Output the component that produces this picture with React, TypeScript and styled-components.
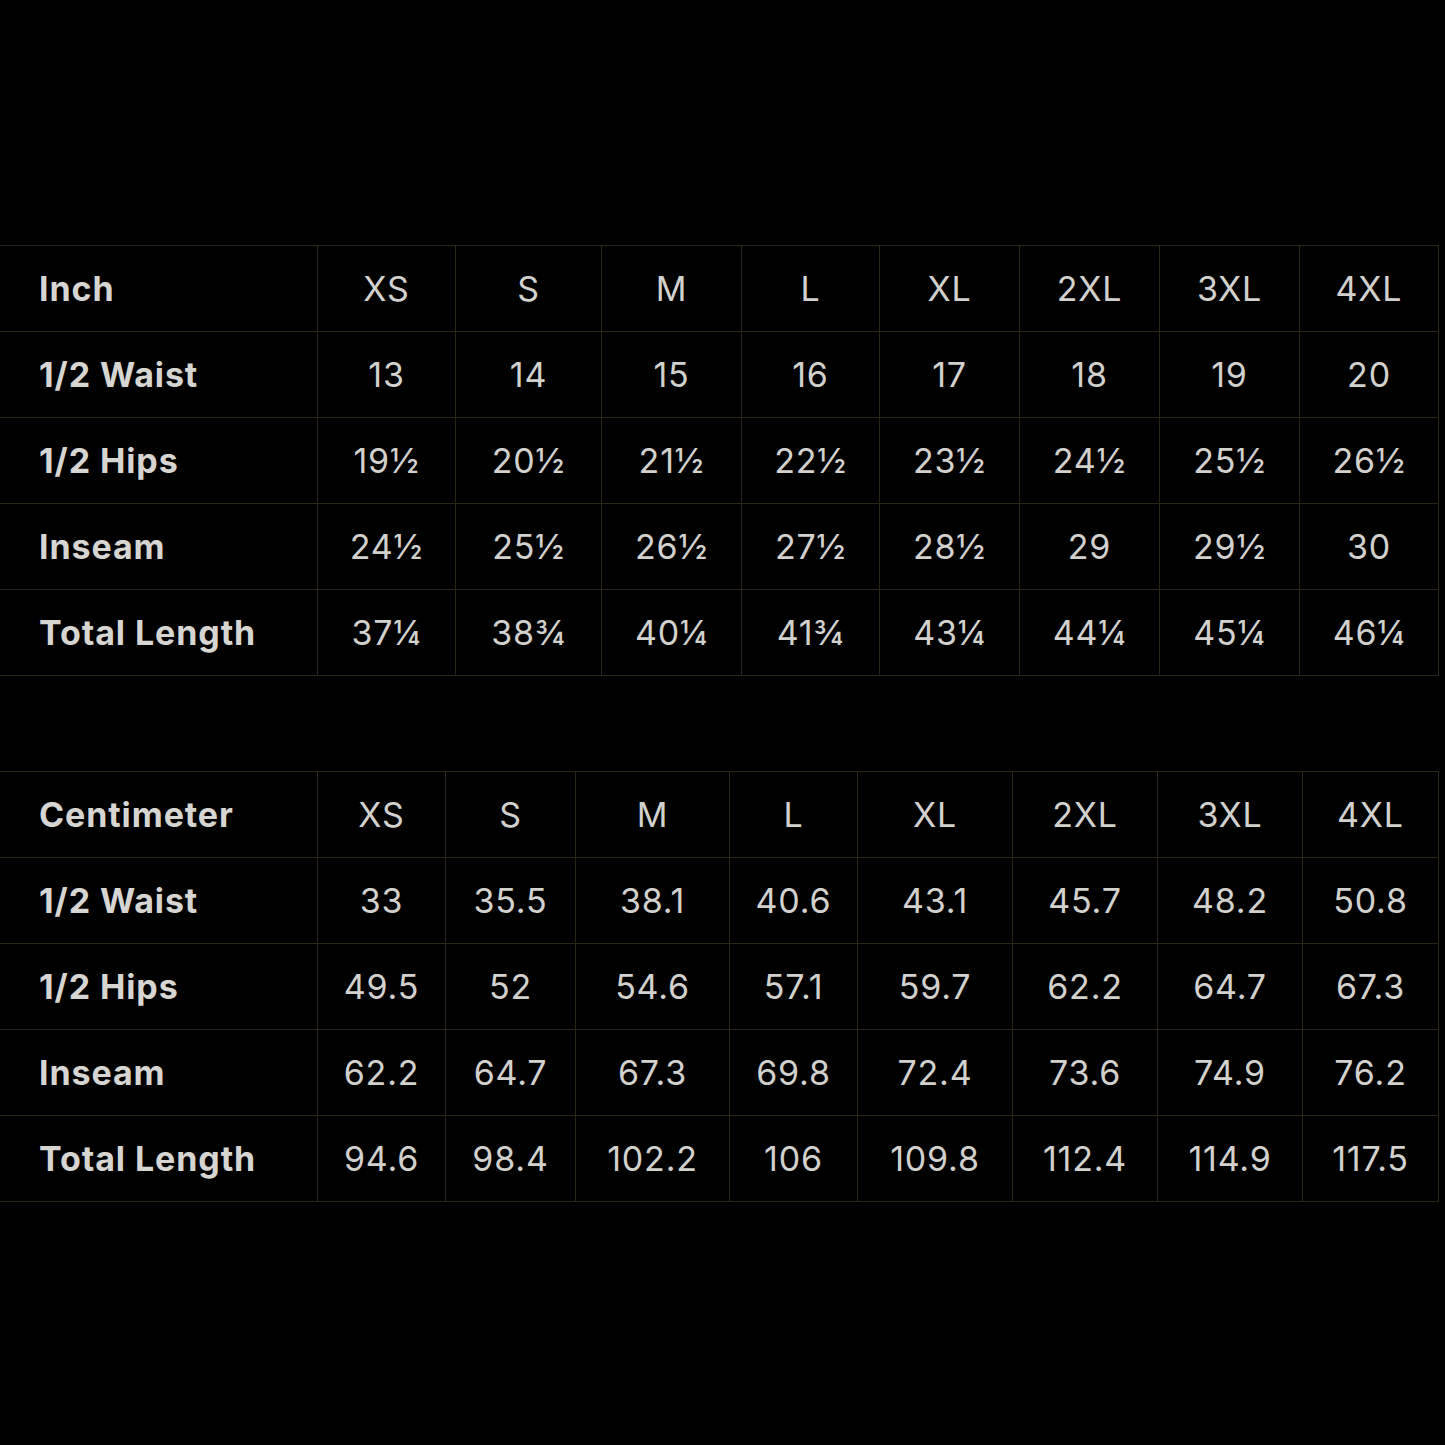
import React from "react";
import styled, { createGlobalStyle } from "styled-components";

const Global = createGlobalStyle`
  html, body { margin: 0; padding: 0; background: #000; }
  body { font-family: Inter, "Noto Sans", "Liberation Sans", sans-serif; }
`;

const Page = styled.div`
  display: flex;
  flex-direction: column;
  gap: 95px;
  padding-top: 245px;
  min-height: 1445px;
  box-sizing: border-box;
  background: #000;
`;

const Table = styled.div`
  width: 1439px;
  border-top: 1px solid #2c2619;
`;

const Row = styled.div<{ $cols: string }>`
  display: grid;
  grid-template-columns: ${(p) => p.$cols};
  height: 86px;
  box-sizing: border-box;
  border-bottom: 1px solid #2c2619;
`;

const Cell = styled.div<{ $label?: boolean }>`
  display: flex;
  align-items: center;
  justify-content: ${(p) => (p.$label ? "flex-start" : "center")};
  padding-left: ${(p) => (p.$label ? "39px" : "0")};
  border-right: 1px solid #2c2619;
  box-sizing: border-box;
  font-size: 34px;
  font-weight: ${(p) => (p.$label ? 700 : 400)};
  color: ${(p) => (p.$label ? "#d6d5d1" : "#d2d1cd")};
  letter-spacing: ${(p) => (p.$label ? "0.9px" : "0.8px")};
  white-space: nowrap;
`;

type TableData = { cols: number[]; rows: string[][] };

const inch: TableData = {
  cols: [318, 138, 146, 140, 138, 140, 140, 140, 139],
  rows: [
    ["Inch", "XS", "S", "M", "L", "XL", "2XL", "3XL", "4XL"],
    ["1/2 Waist", "13", "14", "15", "16", "17", "18", "19", "20"],
    ["1/2 Hips", "19½", "20½", "21½", "22½", "23½", "24½", "25½", "26½"],
    ["Inseam", "24½", "25½", "26½", "27½", "28½", "29", "29½", "30"],
    ["Total Length", "37¼", "38¾", "40¼", "41¾", "43¼", "44¼", "45¼", "46¼"],
  ],
};

const cm: TableData = {
  cols: [318, 128, 130, 154, 128, 155, 145, 145, 136],
  rows: [
    ["Centimeter", "XS", "S", "M", "L", "XL", "2XL", "3XL", "4XL"],
    ["1/2 Waist", "33", "35.5", "38.1", "40.6", "43.1", "45.7", "48.2", "50.8"],
    ["1/2 Hips", "49.5", "52", "54.6", "57.1", "59.7", "62.2", "64.7", "67.3"],
    ["Inseam", "62.2", "64.7", "67.3", "69.8", "72.4", "73.6", "74.9", "76.2"],
    ["Total Length", "94.6", "98.4", "102.2", "106", "109.8", "112.4", "114.9", "117.5"],
  ],
};

function SizeTable({ data }: { data: TableData }) {
  const cols = data.cols.map((w) => `${w}px`).join(" ");
  return (
    <Table>
      {data.rows.map((r, i) => (
        <Row key={i} $cols={cols}>
          {r.map((c, j) => (
            <Cell key={j} $label={j === 0}>
              {c}
            </Cell>
          ))}
        </Row>
      ))}
    </Table>
  );
}

export default function App() {
  return (
    <>
      <Global />
      <Page>
        <SizeTable data={inch} />
        <SizeTable data={cm} />
      </Page>
    </>
  );
}
